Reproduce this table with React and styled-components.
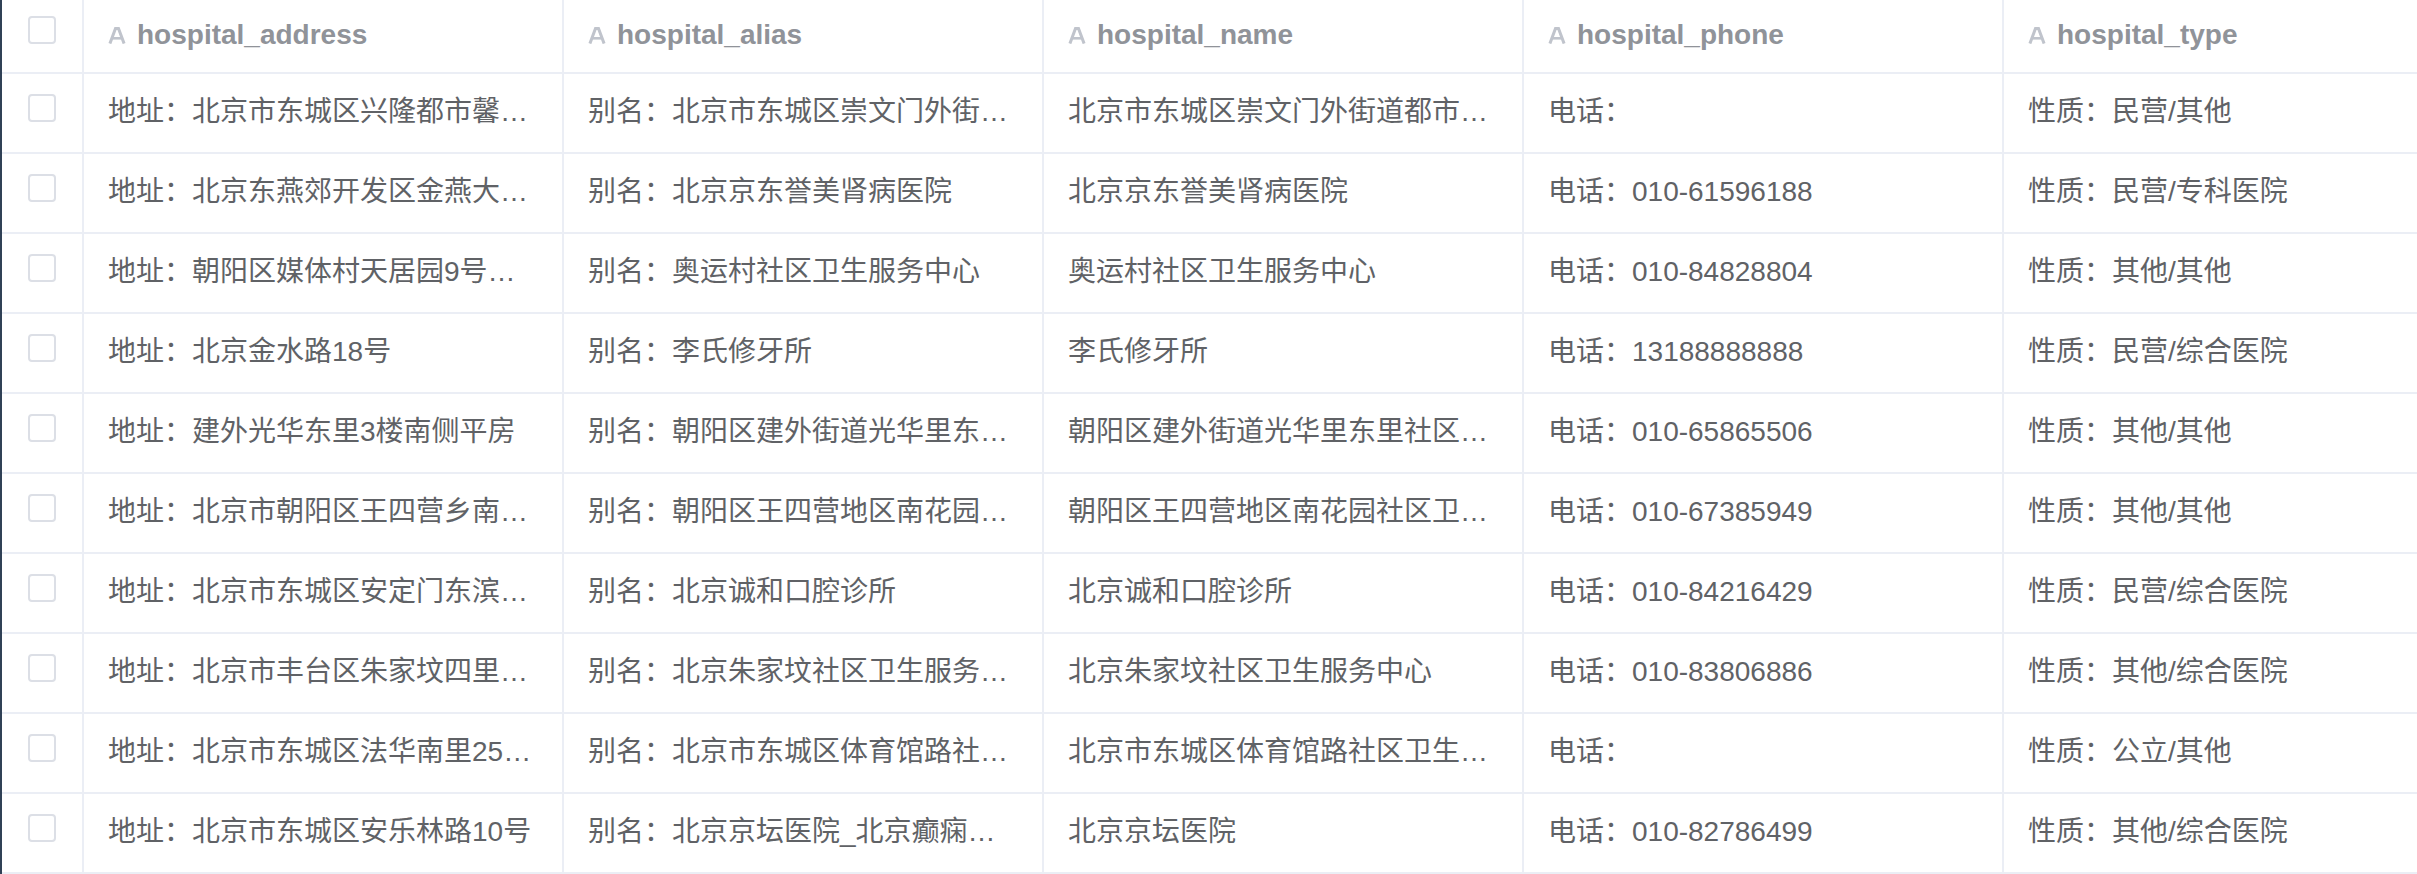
import React from 'react'
import styled, { createGlobalStyle } from 'styled-components';

const rows = [
    ['地址：北京市东城区兴隆都市馨园底商一层', '别名：北京市东城区崇文门外街道都市馨园社区卫生服务站', '北京市东城区崇文门外街道都市馨园社区卫生服务站', '电话：', '性质：民营/其他'],
    ['地址：北京东燕郊开发区金燕大街东侧', '别名：北京京东誉美肾病医院', '北京京东誉美肾病医院', '电话：010-61596188', '性质：民营/专科医院'],
    ['地址：朝阳区媒体村天居园9号楼底商', '别名：奥运村社区卫生服务中心', '奥运村社区卫生服务中心', '电话：010-84828804', '性质：其他/其他'],
    ['地址：北京金水路18号', '别名：李氏修牙所', '李氏修牙所', '电话：13188888888', '性质：民营/综合医院'],
    ['地址：建外光华东里3楼南侧平房', '别名：朝阳区建外街道光华里东里社区卫生服务站', '朝阳区建外街道光华里东里社区卫生服务站', '电话：010-65865506', '性质：其他/其他'],
    ['地址：北京市朝阳区王四营乡南花园村', '别名：朝阳区王四营地区南花园社区卫生服务站', '朝阳区王四营地区南花园社区卫生服务站', '电话：010-67385949', '性质：其他/其他'],
    ['地址：北京市东城区安定门东滨河路', '别名：北京诚和口腔诊所', '北京诚和口腔诊所', '电话：010-84216429', '性质：民营/综合医院'],
    ['地址：北京市丰台区朱家坟四里甲1号', '别名：北京朱家坟社区卫生服务中心', '北京朱家坟社区卫生服务中心', '电话：010-83806886', '性质：其他/综合医院'],
    ['地址：北京市东城区法华南里25号楼', '别名：北京市东城区体育馆路社区卫生服务中心', '北京市东城区体育馆路社区卫生服务中心', '电话：', '性质：公立/其他'],
    ['地址：北京市东城区安乐林路10号', '别名：北京京坛医院_北京癫痫病医院', '北京京坛医院', '电话：010-82786499', '性质：其他/综合医院'],
]

const columns = ['hospital_address', 'hospital_alias', 'hospital_name', 'hospital_phone', 'hospital_type']

const TextIcon = () => (
    <svg width="18" height="17" viewBox="0 0 18 17">
        <path d="M1.9 16.6 L7.5 1.5 H10.5 L16.1 16.6" fill="none" stroke="#c0c4cc" strokeWidth="3" strokeLinejoin="miter"/>
        <path d="M4.6 11.3 H13.4" stroke="#c0c4cc" strokeWidth="2.6"/>
    </svg>
)

const App = () => {
    return (
        <>
            <GlobalStyle/>
            <Table>
                <HeaderRow>
                    <CheckCell lift={12}><Checkbox/></CheckCell>
                    {columns.map((c, i) => (
                        <HeaderCell key={c} last={i === columns.length - 1}>
                            <TextIcon/>
                            <HeaderLabel>{c}</HeaderLabel>
                        </HeaderCell>
                    ))}
                </HeaderRow>

                {rows.map((r, ri) => (
                    <BodyRow key={ri}>
                        <CheckCell lift={10}><Checkbox/></CheckCell>
                        {r.map((v, i) => (
                            <Cell key={i} last={i === r.length - 1}>{v}</Cell>
                        ))}
                    </BodyRow>
                ))}
            </Table>
        </>
    )
}

export default App

const GlobalStyle = createGlobalStyle`
    html, body {
        margin: 0;
        padding: 0;
        background: #fff;
    }
    body {
        font-family: "Liberation Sans", "Noto Sans CJK SC", sans-serif;
    }
`

const Table = styled.div`
    width: 2417px;
    height: 874px;
    box-sizing: border-box;
    border-left: 2px solid #304156;
    overflow: hidden;
    background: #fff;
`

const RowBase = styled.div`
    display: grid;
    grid-template-columns: 82px repeat(4, 480px) 1fr;
`

const HeaderRow = styled(RowBase)`
    height: 74px;
`

const BodyRow = styled(RowBase)`
    height: 80px;
`

const CheckCell = styled.div`
    box-sizing: border-box;
    display: flex;
    align-items: center;
    justify-content: center;
    padding-bottom: ${p => p.lift}px;
    border-right: 2px solid #ebeef5;
    border-bottom: 2px solid #ebeef5;
`

const Checkbox = styled.span`
    box-sizing: border-box;
    width: 28px;
    height: 28px;
    border: 2px solid #dcdfe6;
    border-radius: 4px;
    background: #fff;
`

const HeaderCell = styled.div`
    box-sizing: border-box;
    display: flex;
    align-items: center;
    gap: 11px;
    padding: 0 24px 2px;
    border-right: ${p => p.last ? 'none' : '2px solid #ebeef5'};
    border-bottom: 2px solid #ebeef5;
`

const HeaderLabel = styled.span`
    font-size: 28px;
    font-weight: bold;
    color: #909399;
    white-space: nowrap;
`

const Cell = styled.div`
    box-sizing: border-box;
    padding: 0 24px;
    line-height: 76px;
    font-size: 28px;
    color: #606266;
    white-space: nowrap;
    overflow: hidden;
    text-overflow: ellipsis;
    border-right: ${p => p.last ? 'none' : '2px solid #ebeef5'};
    border-bottom: 2px solid #ebeef5;
`
